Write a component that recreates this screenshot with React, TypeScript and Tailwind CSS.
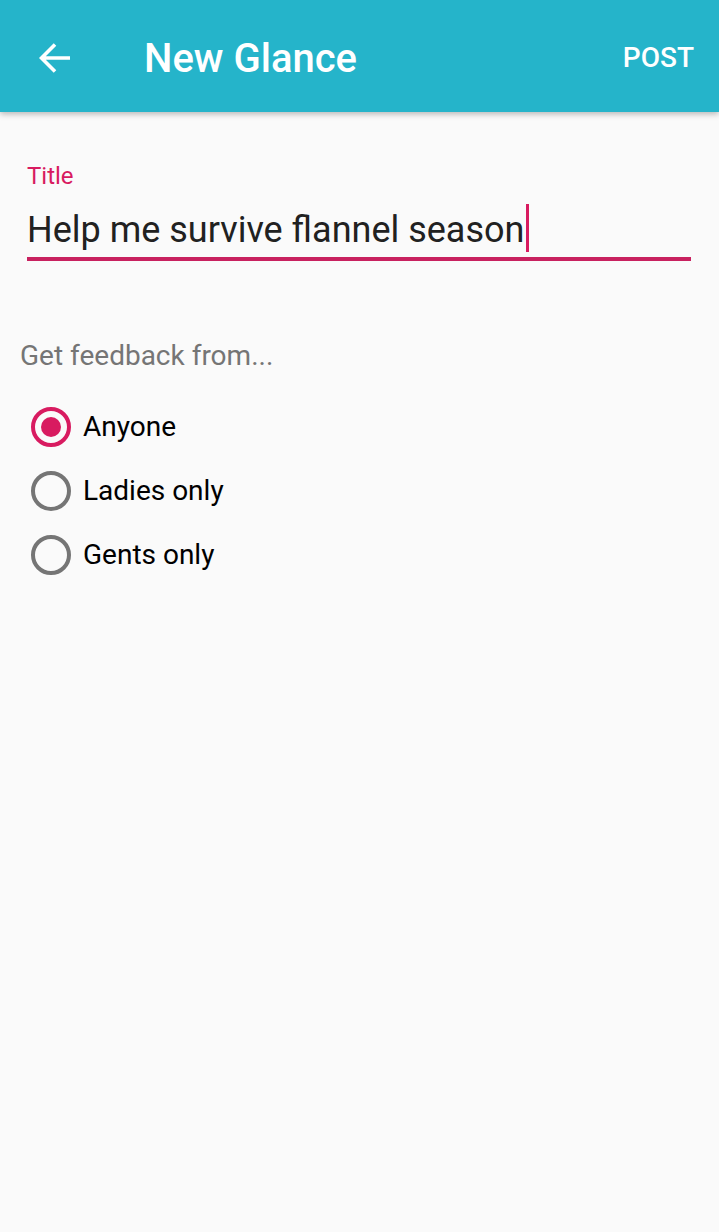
import React, { useState } from "react";

const options = ["Anyone", "Ladies only", "Gents only"];

/** Material-style radio */
const Radio: React.FC<{ checked: boolean }> = ({ checked }) => (
  <span
    className={`flex items-center justify-center w-[40px] h-[40px] rounded-full border-[4px] ${
      checked ? "border-[#D81B60]" : "border-[#757575]"
    }`}
  >
    {checked && <span className="block w-[20px] h-[20px] rounded-full bg-[#D81B60]" />}
  </span>
);

export default function App() {
  const [who, setWho] = useState("Anyone");

  return (
    <div className="min-h-[1232px] bg-[#FAFAFA] font-['Roboto',sans-serif]">
      {/* app bar */}
      <header className="relative z-10 flex items-center h-[112px] pt-[4px] bg-[#25B4CA] text-white shadow-[0_2px_6px_rgba(0,0,0,0.28)]">
        <button className="ml-[39px] w-[32px] h-[32px] flex items-center justify-center" aria-label="Back">
          <svg viewBox="0 0 32 32" className="w-[32px] h-[32px]" aria-hidden="true">
            <path d="M31 16H3M16 2.5L2.5 16L16 29.5" fill="none" stroke="currentColor" strokeWidth="3.6" />
          </svg>
        </button>
        <h1 className="ml-[73px] mt-[2px] text-[40px] leading-none font-medium">New Glance</h1>
        <button className="ml-auto mr-[25px] text-[28px] leading-none font-medium">POST</button>
      </header>

      <main className="px-[27px]">
        {/* title field */}
        <div className="pt-[52px]">
          <label className="block text-[24px] leading-none text-[#D81B60]">Title</label>
          <div className="relative mt-[24px] text-[36px] leading-none text-[#212121]">
            <span>Help me survive flannel season</span>
            <span className="absolute top-[-8px] ml-[2px] inline-block w-[3px] h-[48px] bg-[#D81B60]" />
          </div>
          <div className="mt-[9px] mr-[1px] h-[4px] bg-[#C8215F]" />
        </div>

        {/* audience */}
        <p className="mt-[81px] -ml-[7px] text-[28px] leading-none text-[#757575]">Get feedback from...</p>
        <div className="mt-[25px] flex flex-col">
          {options.map((o) => (
            <button
              key={o}
              onClick={() => setWho(o)}
              className="flex items-center h-[64px] ml-[4px] gap-[13px] text-left"
            >
              <Radio checked={who === o} />
              <span className="-ml-[1px] text-[28px] leading-none text-black">{o}</span>
            </button>
          ))}
        </div>
      </main>
    </div>
  );
}
